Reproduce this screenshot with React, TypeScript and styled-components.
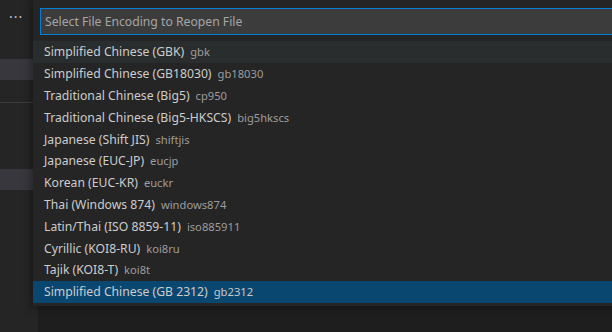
import React from 'react';
import styled, { createGlobalStyle } from 'styled-components';

const Global = createGlobalStyle`
  html, body { margin: 0; padding: 0; background: #1e1e1e; overflow: hidden; }
  * { box-sizing: border-box; }
`;

const Shell = styled.div`
  display: flex;
  width: 612px;
  height: 332px;
  background: #1e1e1e;
  font-family: "Noto Sans", "Open Sans", sans-serif;
  overflow: hidden;
  position: relative;
`;

const Sidebar = styled.div`
  width: 38px;
  flex-shrink: 0;
  background: #252526;
  display: flex;
  flex-direction: column;
`;

const Dots = styled.div`
  height: 34px;
  display: flex;
  align-items: center;
  padding-left: 9px;
  color: #c5c5c5;
  font-size: 14px;
  letter-spacing: 1px;
  line-height: 1;
`;

const SideRow = styled.div<{ $h: number; $bg?: string; $line?: boolean }>`
  height: ${p => p.$h}px;
  background: ${p => p.$bg || 'transparent'};
  border-bottom: ${p => (p.$line ? '1px solid #3c3c3c' : 'none')};
  flex-shrink: 0;
`;

const Editor = styled.div`
  flex: 1;
  background: #1e1e1e;
`;

const Widget = styled.div`
  position: absolute;
  left: 33px;
  top: 0;
  width: 620px;
  background: #252526;
  padding: 8px 0 3px 0;
  box-shadow: 0 0 8px 2px rgba(0, 0, 0, 0.36);
`;

const InputBox = styled.div`
  margin: 0 0 0 7px;
  height: 27px;
  background: #3c3c3c;
  border: 1px solid #007fd4;
  border-right: none;
  display: flex;
  align-items: center;
  padding-left: 4px;
  color: #a6a6a6;
  font-size: 12.2px;
`;

const List = styled.div`
  margin-top: 6px;
  display: flex;
  flex-direction: column;
`;

const Item = styled.div<{ $state?: 'hover' | 'selected' }>`
  height: 21.8px;
  display: flex;
  align-items: center;
  padding-left: 11px;
  gap: 6px;
  white-space: nowrap;
  background: ${p =>
    p.$state === 'selected' ? '#094771' : p.$state === 'hover' ? '#2a2d2e' : 'transparent'};
`;

const Label = styled.span`
  color: #cccccc;
  font-size: 12.2px;
`;

const Desc = styled.span<{ $selected?: boolean }>`
  color: ${p => (p.$selected ? '#c8c8c8' : '#9d9d9d')};
  font-size: 11.2px;
`;

const items: [string, string][] = [
  ['Simplified Chinese (GBK)', 'gbk'],
  ['Simplified Chinese (GB18030)', 'gb18030'],
  ['Traditional Chinese (Big5)', 'cp950'],
  ['Traditional Chinese (Big5-HKSCS)', 'big5hkscs'],
  ['Japanese (Shift JIS)', 'shiftjis'],
  ['Japanese (EUC-JP)', 'eucjp'],
  ['Korean (EUC-KR)', 'euckr'],
  ['Thai (Windows 874)', 'windows874'],
  ['Latin/Thai (ISO 8859-11)', 'iso885911'],
  ['Cyrillic (KOI8-RU)', 'koi8ru'],
  ['Tajik (KOI8-T)', 'koi8t'],
  ['Simplified Chinese (GB 2312)', 'gb2312'],
];

export default function App() {
  return (
    <Shell>
      <Global />
      <Sidebar>
        <Dots>···</Dots>
        <SideRow $h={25} />
        <SideRow $h={21} $bg="#37373d" />
        <SideRow $h={23} $line />
        <SideRow $h={66} />
        <SideRow $h={21} $bg="#37373d" />
      </Sidebar>
      <Editor />
      <Widget>
        <InputBox>Select File Encoding to Reopen File</InputBox>
        <List>
          {items.map(([label, desc], i) => {
            const state = i === 0 ? 'hover' : i === items.length - 1 ? 'selected' : undefined;
            return (
              <Item key={desc} $state={state}>
                <Label>{label}</Label>
                <Desc $selected={state === 'selected'}>{desc}</Desc>
              </Item>
            );
          })}
        </List>
      </Widget>
    </Shell>
  );
}
